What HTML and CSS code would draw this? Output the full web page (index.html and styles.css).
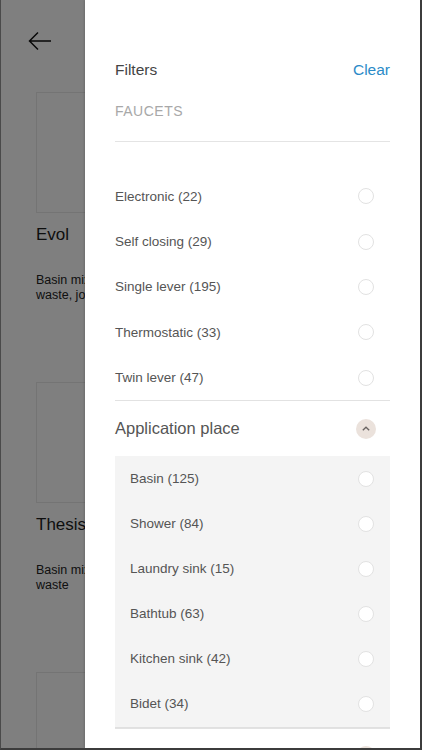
FILE: index.html
```html
<!DOCTYPE html>
<html>
<head>
<meta charset="utf-8">
<link rel="stylesheet" href="styles.css">
</head>
<body>
<div class="device">
  <div class="page">
    <div class="topbar">
      <svg class="back" width="24" height="20" viewBox="0 0 24 20"><path d="M23 10H2M10 1.5L1.5 10L10 18.5" fill="none" stroke="#111" stroke-width="1.5"/></svg>
    </div>
    <div class="product">
      <div class="thumb"></div>
      <div class="pname">Evol</div>
      <div class="pdesc"><span>Basin mixer</span><span>waste, joint</span></div>
    </div>
    <div class="product">
      <div class="thumb"></div>
      <div class="pname">Thesis</div>
      <div class="pdesc"><span>Basin mixer</span><span>waste</span></div>
    </div>
    <div class="product">
      <div class="thumb"></div>
    </div>
  </div>
  <div class="overlay"></div>
  <aside class="drawer">
    <div class="dhead">
      <span class="dtitle">Filters</span>
      <span class="clear">Clear</span>
    </div>
    <div class="section">FAUCETS</div>
    <ul class="list first">
      <li><span>Electronic (22)</span><i class="radio"></i></li>
      <li><span>Self closing (29)</span><i class="radio"></i></li>
      <li><span>Single lever (195)</span><i class="radio"></i></li>
      <li><span>Thermostatic (33)</span><i class="radio"></i></li>
      <li><span>Twin lever (47)</span><i class="radio"></i></li>
    </ul>
    <div class="group">
      <div class="ghead"><span>Application place</span><i class="toggle"><svg width="8" height="5" viewBox="0 0 8 5"><path d="M0.8 4.3L4 1.2L7.2 4.3" fill="none" stroke="#6a6462" stroke-width="1.3"/></svg></i></div>
      <ul class="list sub">
        <li><span>Basin (125)</span><i class="radio"></i></li>
        <li><span>Shower (84)</span><i class="radio"></i></li>
        <li><span>Laundry sink (15)</span><i class="radio"></i></li>
        <li><span>Bathtub (63)</span><i class="radio"></i></li>
        <li><span>Kitchen sink (42)</span><i class="radio"></i></li>
        <li><span>Bidet (34)</span><i class="radio"></i></li>
      </ul>
    </div>
    <div class="group">
      <div class="ghead"><span></span><i class="toggle"></i></div>
    </div>
  </aside>
</div>
</body>
</html>
```
FILE: styles.css
```css
html, body {
  margin: 0;
  padding: 0;
  background: #3c3c3c;
}
body {
  font-family: "Liberation Sans", Arial, sans-serif;
}
.device {
  position: relative;
  width: 419px;
  height: 748px;
  border-left: 1px solid #4a4a4a;
  border-right: 2px solid #3c3c3c;
  border-bottom: 2px solid #3c3c3c;
  overflow: hidden;
  background: #fff;
}
.page {
  width: 49px;
  padding: 0 0 0 35px;
  overflow: hidden;
}
.topbar {
  height: 92px;
  display: flex;
  align-items: flex-start;
}
.back {
  margin: 31px 0 0 -8px;
}
.product {
  height: 290px;
}
.thumb {
  width: 200px;
  height: 119px;
  border: 1px solid #e8e8e8;
}
.pname {
  margin-top: 12px;
  font-size: 17px;
  line-height: 20px;
  color: #1c1c1c;
  white-space: nowrap;
}
.pdesc {
  margin-top: 28px;
  font-size: 12.5px;
  line-height: 14.5px;
  color: #222;
}
.pdesc span {
  display: block;
  white-space: nowrap;
}
.overlay {
  position: absolute;
  inset: 0;
  background: rgba(0, 0, 0, 0.5);
}
.drawer {
  position: absolute;
  top: 0;
  left: 84px;
  width: 335px;
  height: 100%;
  background: #fff;
  box-sizing: border-box;
  padding: 58.5px 30px 0 30px;
  box-shadow: -1px 0 2px rgba(0,0,0,0.15);
}
.dhead {
  display: flex;
  justify-content: space-between;
  align-items: center;
  height: 22px;
  font-size: 15.5px;
}
.dtitle { color: #444; }
.clear { color: #2b8bc8; }
.section {
  margin-top: 20.5px;
  line-height: 20px;
  padding-bottom: 20px;
  font-size: 14px;
  letter-spacing: 0.5px;
  color: #a8a8a8;
  border-bottom: 1.5px solid #e4e4e4;
}
.list {
  list-style: none;
  margin: 0;
  padding: 0;
}
.list.first {
  margin-top: 31.5px;
}
.list li {
  display: flex;
  justify-content: space-between;
  align-items: center;
  height: 45.4px;
  font-size: 13.5px;
  color: #555;
  padding-right: 16px;
}
.radio {
  display: block;
  width: 16px;
  height: 16px;
  box-sizing: border-box;
  border: 1px solid #e2e2e2;
  border-radius: 50%;
  background: #fff;
}
.group {
  border-top: 1px solid #e2e2e2;
}
.ghead {
  display: flex;
  justify-content: space-between;
  align-items: center;
  height: 54.5px;
  font-size: 16.5px;
  color: #555;
  padding-right: 14px;
}
.toggle {
  display: flex;
  align-items: center;
  justify-content: center;
  width: 20px;
  height: 20px;
  border-radius: 50%;
  background: #ebe2dc;
}
.list.sub {
  background: #f4f4f4;
  border-bottom: 1px solid #e0e0e0;
}
.list.sub li {
  height: 45.1px;
  padding-left: 15px;
}
```
